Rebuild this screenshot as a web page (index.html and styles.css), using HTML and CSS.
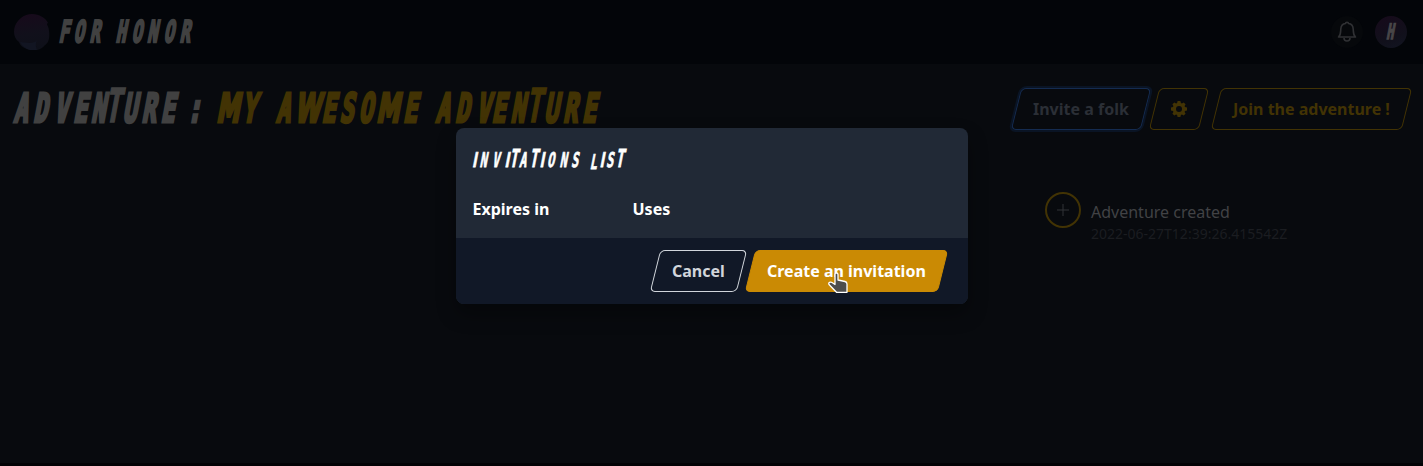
FILE: index.html
```html
<!DOCTYPE html>
<html lang="en">
<head>
<meta charset="utf-8">
<title>For Honor</title>
<link rel="stylesheet" href="styles.css">
</head>
<body>
<header class="topbar">
  <div class="brand">
    <svg class="orb" viewBox="0 0 36 36"><defs><linearGradient id="orb" x1=".4" y1="0" x2=".55" y2="1"><stop offset="0" stop-color="#170a1b"/><stop offset=".55" stop-color="#11101b"/><stop offset="1" stop-color="#0e1019"/></linearGradient></defs><path fill="url(#orb)" d="M18 0C25 0 32 4 34 9C31 10 35 12 35 17C36 25 34 29 31 31C27 36 20 38 13 35C8 33 6 31 5 28C0 24-1 18 1 12C4 5 10 0 18 0Z"/><path fill="#121522" d="M6 28C14 29 20 30 23 26C21 31 22 33 23 36C16 38 9 34 6 28Z"/></svg>
    <svg class="display wordmark" width="150" height="36"><g transform="translate(0 28) skewX(-11) scale(1 1.75)"><text x="-.5 14.500 30.500 45 56.500 72.500 88 104.500 120.500">FOR HONOR</text></g></svg>
  </div>
  <div class="tools">
    <div class="bell"><svg width="20" height="22" viewBox="0 0 20 22" fill="none" stroke="#303134" stroke-width="1.6"><path d="M1.5 16C4 14 3.5 11 3.8 8C4 4.5 6 2.8 8.5 2.5C8.5 .8 11.5 .8 11.5 2.5C14 2.8 16 4.5 16.2 8C16.5 11 16 14 18.5 16Z" stroke-linejoin="round"/><path d="M7 17C7 21 13 21 13 17"/></svg></div>
    <div class="avatar"><svg class="display initial" width="32" height="32"><g transform="translate(11 23) skewX(-11) scale(1 1.7)"><text x="0">H</text></g></svg></div>
  </div>
</header>
<main class="page">
  <div class="heading">
    <svg class="display title" width="610" height="50"><g transform="translate(0 38) skewX(-10.500) scale(1 1.7)">
      <text x="-.5 19 40 59 77">ADVEN<tspan class="tall" x="90">T</tspan><tspan x="108.500 127.500 146.500">URE</tspan><tspan x="173">:</tspan></text>
      <text class="gold"><tspan class="wide" x="202">M</tspan><tspan x="228 262">YA</tspan><tspan class="wide" x="280.500">W</tspan><tspan x="307.500 325.500 344.500">ESO</tspan><tspan class="wide" x="362">M</tspan><tspan x="389 421.500 450 462 477 496">E<tspan x="421.500 441 462 477.500 496.500">ADVEN</tspan></tspan><tspan class="tall" x="511">T</tspan><tspan x="530 549 568">URE</tspan></text>
    </g></svg>
    <div class="actions">
      <button class="btn focus"><span>Invite a folk</span></button>
      <button class="btn yellow"><span><svg width="16" height="16" viewBox="0 0 16 16"><path fill="currentColor" fill-rule="evenodd" d="M6.6 0h2.8l.5 2 1 .4 1.8-1 1.9 1.9-1 1.8.4 1 2 .5v2.8l-2 .5-.4 1 1 1.8-1.9 1.9-1.8-1-1 .4-.5 2H6.600l-.5-2-1-.4-1.800 1-1.900-1.900 1-1.800-.4-1-2-.5V6.600l2-.5.4-1-1-1.800 1.900-1.900 1.800 1 1-.4ZM8 5a3 3 0 1 0 0 6 3 3 0 0 0 0-6Z"/></svg></span></button>
      <button class="btn yellow join"><span>Join the adventure !</span></button>
    </div>
  </div>
  <div class="event">
    <div class="plus"><svg width="12" height="12" viewBox="0 0 12 12" stroke="#303237"><path d="M6 0V12M0 6H12"/></svg></div>
    <div class="details"><div class="what">Adventure created</div><div class="when">2022-06-27T12:39:26.415542Z</div></div>
  </div>
</main>
<div class="edge"></div>
<section class="modal">
  <div class="content">
    <svg class="display subtitle" width="170" height="26"><g transform="translate(0 18.700) skewX(-11) scale(1 1.7)">
      <text><tspan class="bar" x="0">I</tspan><tspan x="7.500 20">NV</tspan><tspan class="bar" x="32.500">I</tspan><tspan class="tall" x="37">T</tspan><tspan x="47">A</tspan><tspan class="tall" x="57">T</tspan><tspan class="bar" x="67.500">I</tspan><tspan x="75 87.500 99">ONS</tspan><tspan x="118" dy="1.500">L</tspan><tspan class="bar" x="127.500" dy="-1.500">I</tspan><tspan x="134">S</tspan><tspan class="tall" x="143">T</tspan></text>
    </g></svg>
    <div class="columns"><span>Expires in</span><span>Uses</span></div>
  </div>
  <div class="footer">
    <button class="btn cancel"><span>Cancel</span></button>
    <button class="btn create"><span>Create an invitation</span></button>
  </div>
</section>
<svg class="pointer" width="20" height="22" viewBox="0 0 20 22"><path fill="#4d4d4d" stroke="#fff" stroke-width="1.300" stroke-linejoin="round" d="M7 2.500C7 .5 10 .5 10 2.500V8L17 9.500Q19 10 19 12V20.300H8.500L1 12.500C0 10.500 2.500 9.500 4 10.500L7 12.500Z"/></svg>
</body>
</html>
```
FILE: styles.css
```css
* { box-sizing: border-box; }
body { margin: 0; width: 1423px; height: 466px; display: flex; flex-direction: column; overflow: hidden; background: #080a0e; font: 16px/24px "Noto Sans", sans-serif; }
svg { display: block; }
.topbar { height: 64px; flex: none; background: #030509; display: flex; align-items: center; justify-content: space-between; padding: 0 16px 0 14px; }
.brand { display: flex; align-items: center; gap: 9px; }
.orb { width: 36px; height: 36px; }
.tools { display: flex; gap: 12px; }
.bell, .avatar { width: 32px; height: 32px; border-radius: 50%; display: grid; place-items: center; }
.bell { background: #06080b; }
.avatar { background: linear-gradient(160deg, #170a1b, #11101b 65%, #121522); }
.display { font-family: "DejaVu Sans Mono", monospace; font-weight: bold; overflow: visible; }
.wordmark { font-size: 17px; fill: #414141; stroke: #414141; stroke-width: 1.4px; }
.initial { font-size: 12.500px; fill: #484648; stroke: #484648; stroke-width: .8px; }
.page { flex: 1; }
.heading { display: flex; justify-content: space-between; padding: 20px 16px 0 14px; height: 92px; }
.title { font-size: 23.400px; fill: #414141; stroke: #414141; stroke-width: 1.900px; }
.title .tall { font-size: 27.400px; stroke-width: 1px; }
.title .wide { font-family: "DejaVu Sans", sans-serif; }
.gold { fill: #423304; stroke: #423304; }
.actions { display: flex; gap: 8px; padding-top: 4px; }
.btn { height: 42px; padding: 0 16px; border: 1px solid; border-radius: 5px; background: none; font: 700 16px/24px "Noto Sans", sans-serif; color: #d1d5db; transform: skewX(-14deg); white-space: nowrap; }
.btn span { display: block; transform: skewX(14deg); }
.focus { color: #2b2f36; border-color: #142b50; box-shadow: 0 0 0 2px #0a1424; }
.yellow { color: #423304; }
.join { margin-left: 4px; }
.event { display: flex; gap: 10px; padding: 36px 0 0 1045px; }
.plus { width: 36px; height: 36px; border: 2px solid #423304; border-radius: 50%; display: grid; place-items: center; }
.details { padding-top: 8px; }
.what { color: #414245; }
.when { color: #1b1d21; font-size: 14px; line-height: 20px; }
.edge { height: 3px; background: #020205; }
.modal { position: absolute; left: 456px; top: 128px; width: 512px; border-radius: 8px; overflow: hidden; background: #212936; box-shadow: 0 10px 20px #0005; }
.content { height: 110px; padding: 20px 16px 0; }
.subtitle { font-size: 12px; fill: #fff; stroke: #fff; stroke-width: .45px; }
.subtitle .tall { font-size: 14.600px; }
.subtitle .bar { font-family: "DejaVu Sans", sans-serif; }
.columns { display: grid; grid-template-columns: 160px 1fr; padding: 23px 0 0 .5px; color: #fff; font-weight: 700; }
.footer { height: 66px; padding: 12px 25px; display: flex; justify-content: flex-end; gap: 8px; background: #111827; }
.create { background: #ca8a04; border-color: #ca8a04; color: #fff; }
.pointer { position: absolute; left: 828px; top: 272px; }
```
